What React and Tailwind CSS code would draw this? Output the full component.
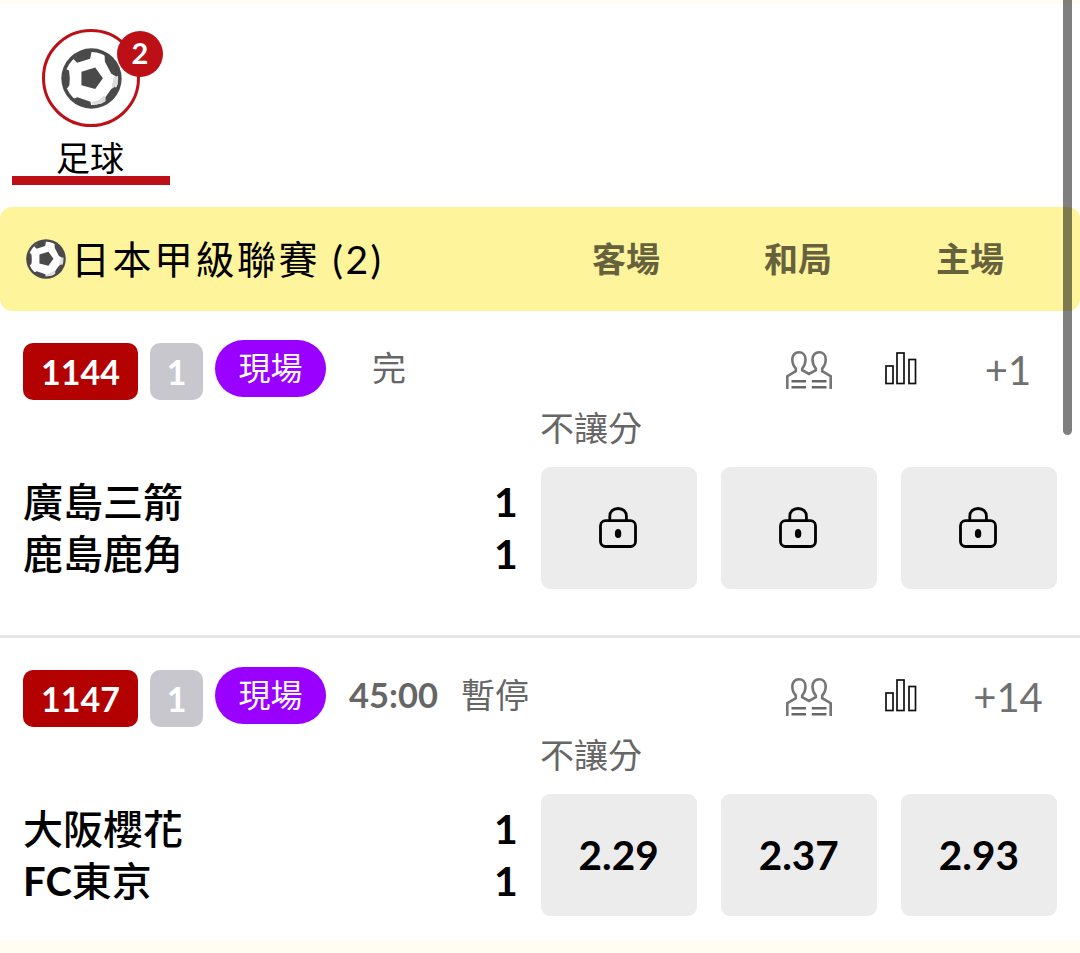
const matches = [
  {
    id: "1144",
    count: 1,
    time: "",
    status: "完",
    more: "+1",
    home: "廣島三箭",
    away: "鹿島鹿角",
    homeScore: 1,
    awayScore: 1,
    odds: [null, null, null],
  },
  {
    id: "1147",
    count: 1,
    time: "45:00",
    status: "暫停",
    more: "+14",
    home: "大阪櫻花",
    away: "FC東京",
    homeScore: 1,
    awayScore: 1,
    odds: ["2.29", "2.37", "2.93"],
  },
];

function FootballIcon({ className }) {
  return (
    <svg viewBox="21 21 182 182" className={className}>
      <circle cx="112" cy="112" r="90" fill="#4a4a4a" />
      <circle cx="112" cy="112" r="79" fill="#fff" />
      <path
        d="M113 182L134 176L150 163L159 176L141 187L113 191ZM176 120L182 98L190 106L190 130L182 142L172 138Z"
        fill="#dcdcdc"
      />
      <path
        d="M58 54L69 65L108 53L112 33L90 28ZM29 82L45 88Q49 112 46 132L40 140L29 142L24 112ZM56 174L70 168L109 181L112 198L85 195ZM154 181L154 167L171 143L181 137L194 140L180 170ZM151 38L152 62L171 98L186 106L199 100L180 60Z"
        fill="#4a4a4a"
      />
      <path d="M82 92L123 79L146 111L123 143L82 132Z" fill="#4a4a4a" />
    </svg>
  );
}

function PeopleIcon() {
  return (
    <svg viewBox="0 0 46 38" className="w-[46px] h-[38px]" fill="none" stroke="#757575" strokeWidth="2.6">
      <path d="M1.3 38V25.2L9.8 20.2V17.5C7.5 15 6.3 11.5 6.3 8.5C6.3 4 9.2 1.3 12.9 1.3S19.5 4 19.5 8.5C19.5 11.5 18.3 15 16.2 17.5V19.2L23 23L29.8 19.2V17.5C27.7 15 26.5 11.5 26.5 8.5C26.5 4 29.4 1.3 33.1 1.3S39.7 4 39.7 8.5C39.7 11.5 38.5 15 36.2 17.5V20.2L44.7 25.2V38" />
      <path d="M5.5 30.3H20M25.8 30.3H40.5M5.5 36.2H20M25.8 36.2H40.5" stroke="#666" />
    </svg>
  );
}

function StatsIcon() {
  return (
    <svg viewBox="0 0 32 33" className="w-8 h-[33px]" fill="none" stroke="#111" strokeWidth="1.7">
      <rect x="1" y="14" width="7" height="17.5" />
      <rect x="12" y="1" width="7" height="30.5" />
      <rect x="24" y="7.5" width="6.5" height="24" />
    </svg>
  );
}

function LockIcon() {
  return (
    <svg viewBox="0 0 38 41" className="w-[38px] h-[41px]" fill="none" stroke="#000" strokeWidth="2.8">
      <rect x="1.5" y="13.7" width="35" height="25.8" rx="5" />
      <path d="M10.8 13.7V9.5C10.8 4.5 14.2 1.5 19.1 1.5S27.4 4.5 27.4 9.5V13.7" />
      <ellipse cx="19.1" cy="26.5" rx="3.2" ry="4.6" fill="#000" stroke="none" />
    </svg>
  );
}

function OddsButton({ value }) {
  return (
    <button className="flex h-[122px] items-center justify-center rounded-[9px] bg-[#ececec] text-[40.5px] font-bold text-black">
      {value ? (
        value
      ) : (
        <span className="mr-[2px] mb-[2px]">
          <LockIcon />
        </span>
      )}
    </button>
  );
}

function Match({ match }) {
  return (
    <section className="h-[327px] border-b-[3px] border-[#e6e6e6] pr-[23px] pl-[23px] pt-[29px] last:border-b-0">
      <div className="flex h-[62px] items-start">
        <div className="flex w-[763px] items-start">
          <span className="mt-[3px] h-[57px] w-[115px] rounded-[10px] bg-[#b30000] text-center text-[34px] leading-[57px] font-bold text-white">
            {match.id}
          </span>
          <span className="mt-[3px] ml-3 h-[57px] w-[53px] rounded-[10px] bg-[#c8c7ce] text-center text-[34px] leading-[57px] font-bold text-white">
            {match.count}
          </span>
          <span className="ml-3 h-[57px] w-[111px] rounded-[29px] bg-[#9900ff] text-center text-[32px] leading-[56px] text-white">
            現場
          </span>
          <div className="ml-[23px] flex gap-[23px] text-[34px] leading-[56px] text-[#666]">
            <span className="text-[34.5px] font-bold">{match.time}</span>
            <span>{match.status}</span>
          </div>
        </div>
        <div className="mt-[11px] flex shrink-0">
          <PeopleIcon />
        </div>
        <div className="mt-[12px] ml-[53px] flex shrink-0">
          <StatsIcon />
        </div>
        <span className="-mr-[3px] ml-[40px] w-[102px] shrink-0 text-center text-[40px] leading-[60px] text-[#707070]">
          {match.more}
        </span>
      </div>

      <div className="pl-[517px] text-[34px] leading-[52px] text-[#666]">不讓分</div>

      <div className="mt-[13px] flex">
        <div className="mt-[9px] w-[471px] text-[40px] leading-[52px] font-medium text-black">
          <div>{match.home}</div>
          <div>
            {match.away.startsWith("FC") ? (
              <>
                <span className="font-bold">FC</span>
                {match.away.slice(2)}
              </>
            ) : (
              match.away
            )}
          </div>
        </div>
        <div className="mt-[9px] w-[46.5px] text-[41px] leading-[52px] font-bold text-black">
          <div>{match.homeScore}</div>
          <div>{match.awayScore}</div>
        </div>
        <div className="grid flex-1 grid-cols-3 gap-[24px]">
          {match.odds.map((odd, i) => (
            <OddsButton key={i} value={odd} />
          ))}
        </div>
      </div>
    </section>
  );
}

export default function App() {
  return (
    <div
      lang="zh-Hant"
      className="relative h-[953px] w-[1080px] overflow-hidden bg-[#fffdf2] pt-1 font-['Lato','Noto_Sans_CJK_TC',sans-serif]"
    >
      <div className="h-[936px] bg-white">
        <nav className="h-[203px] pl-3">
          <div className="flex h-[181px] w-[158px] flex-col items-center border-b-[9px] border-[#bc1016] pt-[25px]">
            <div className="relative flex h-[98px] w-[98px] shrink-0 items-center justify-center rounded-full border-[3px] border-[#bc1016]">
              <FootballIcon className="h-[61px] w-[61px]" />
              <span className="absolute -top-[1px] left-[72px] h-[46px] w-[46px] rounded-full bg-[#bc1016] text-center text-[29px] leading-[44px] font-bold text-white">
                2
              </span>
            </div>
            <span className="mt-[7px] mr-[2px] text-[34px] leading-[48px] text-black">足球</span>
          </div>
        </nav>

        <header className="flex h-[104px] items-center rounded-xl bg-[#fef49c] pl-[26px]">
          <FootballIcon className="h-[40px] w-[40px]" />
          <h1 className="mr-[1px] ml-[5px] w-[468px] text-[39px] tracking-[2.5px] text-black">日本甲級聯賽 (2)</h1>
          <div className="mb-[2px] grid w-[516px] grid-cols-3 text-center text-[34px] font-bold text-[#66623e]">
            <span>客場</span>
            <span>和局</span>
            <span>主場</span>
          </div>
        </header>

        <main>
          {matches.map((match) => (
            <Match key={match.id} match={match} />
          ))}
        </main>
      </div>

      {/* scroll thumb */}
      <div className="absolute top-0 right-2 h-[435px] w-[9px] rounded-b-full bg-black/50" />
    </div>
  );
}
